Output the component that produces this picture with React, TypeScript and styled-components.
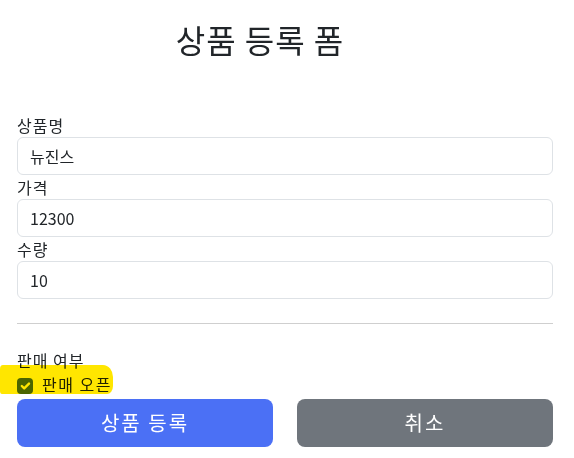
import styled, { createGlobalStyle } from "styled-components";

const GlobalStyle = createGlobalStyle`
  * {
    box-sizing: border-box;
  }
  body {
    margin: 0;
    background: #fff;
    color: #212529;
    font-family: "Noto Sans CJK KR", "Noto Sans", sans-serif;
    font-size: 16px;
    line-height: 1.5;
  }
`;

const Container = styled.div`
  width: 574px;
  padding: 20px 21px 0 17px;
`;

const Title = styled.h2`
  margin: 0 0 55px;
  padding-right: 50px;
  font-size: 32px;
  font-weight: 400;
  line-height: 38px;
  text-align: center;
  letter-spacing: 1px;
`;

const Form = styled.form`
  display: flex;
  flex-direction: column;
`;

const Label = styled.label`
  display: block;
  height: 24px;
  line-height: 24px;
  letter-spacing: 1px;
`;

const Input = styled.input`
  display: block;
  width: 100%;
  height: 38px;
  padding: 6px 12px;
  border: 1px solid #dee2e6;
  border-radius: 6px;
  font: inherit;
  color: #212529;
  background: #fff;
  outline: none;
`;

const Divider = styled.hr`
  margin: 24px 0;
  border: 0;
  border-top: 1px solid #cfcfcf;
`;

const CheckRow = styled.div`
  position: relative;
  display: flex;
  align-items: center;
  gap: 9px;
  height: 24px;
  margin-bottom: 3px;
  letter-spacing: 1.5px;

  &::after {
    content: "";
    position: absolute;
    left: -17px;
    top: -7px;
    width: 113px;
    height: 29px;
    background: #ffe600;
    border-radius: 3px 10px 6px 2px / 4px 12px 8px 3px;
    mix-blend-mode: multiply;
    pointer-events: none;
  }
`;

const Box = styled.span`
  display: inline-flex;
  align-items: center;
  justify-content: center;
  width: 16px;
  height: 16px;
  margin-top: 4px;
  border-radius: 4px;
  background: #4b70f5;
`;

const Buttons = styled.div`
  display: grid;
  grid-template-columns: 1fr 1fr;
  gap: 24px;
`;

const Button = styled.button<{ $variant: "primary" | "secondary" }>`
  height: 48px;
  border: 0;
  border-radius: 8px;
  font: inherit;
  font-size: 20px;
  letter-spacing: 2px;
  color: #fff;
  background: ${(p) => (p.$variant === "primary" ? "#4b70f5" : "#6f757c")};
  cursor: pointer;
`;

export default function App() {
  return (
    <>
      <GlobalStyle />
      <Container>
        <Title>상품 등록 폼</Title>
        <Form onSubmit={(e) => e.preventDefault()}>
          <Label htmlFor="itemName">상품명</Label>
          <Input id="itemName" defaultValue="뉴진스" />
          <Label htmlFor="price">가격</Label>
          <Input id="price" defaultValue="12300" />
          <Label htmlFor="quantity">수량</Label>
          <Input id="quantity" defaultValue="10" />
          <Divider />
          <Label>판매 여부</Label>
          <CheckRow>
            <Box>
              <svg width="16" height="16" viewBox="0 0 20 20">
                <path
                  d="m6 10 3 3 6-6"
                  fill="none"
                  stroke="#fff"
                  strokeWidth="3"
                  strokeLinecap="round"
                  strokeLinejoin="round"
                />
              </svg>
            </Box>
            <span>판매 오픈</span>
          </CheckRow>
          <Buttons>
            <Button type="submit" $variant="primary">
              상품 등록
            </Button>
            <Button type="button" $variant="secondary">
              취소
            </Button>
          </Buttons>
        </Form>
      </Container>
    </>
  );
}
